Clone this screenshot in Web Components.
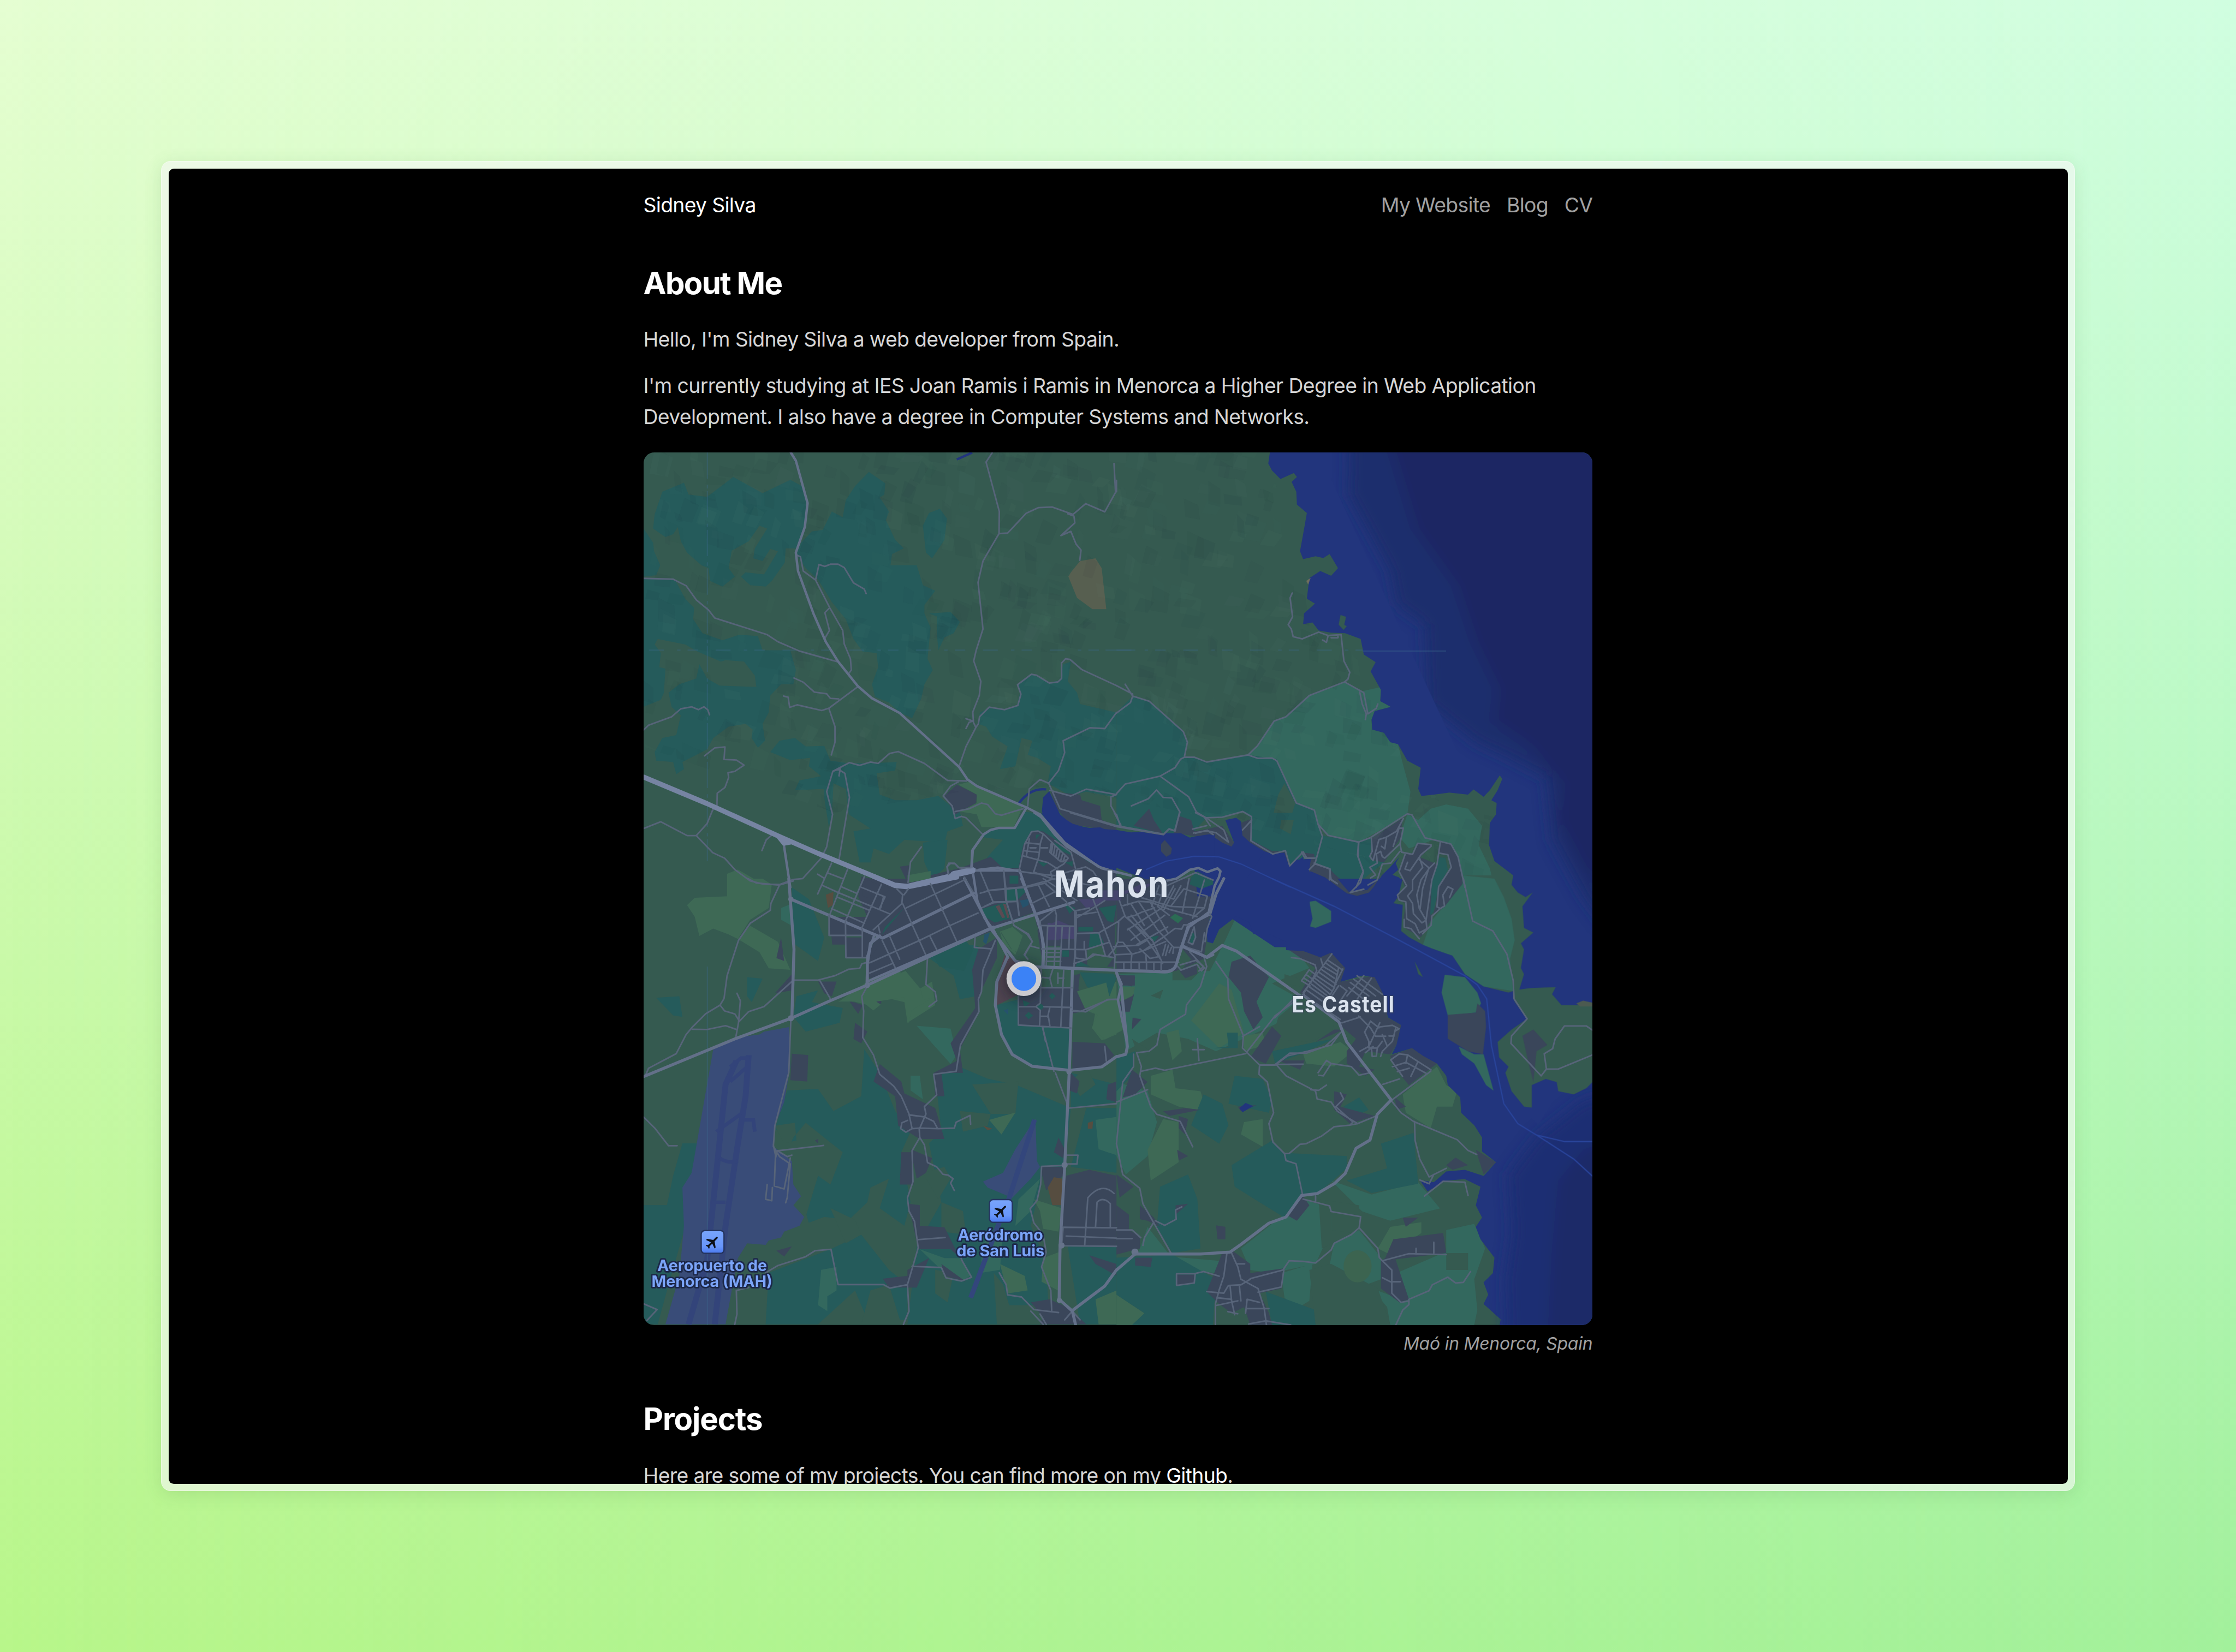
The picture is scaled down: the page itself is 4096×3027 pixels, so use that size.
<!DOCTYPE html>
<html lang="en">
<head>
<meta charset="utf-8">
<title>Sidney Silva</title>
<style>
:root{--r:.80503px}
html,body{margin:0;height:100%;overflow:hidden}
body{font-family:Inter,"Liberation Sans",sans-serif}
</style>
</head>
<body>
<app-backdrop>
  <browser-frame>
    <site-header>
      <span slot="brand">Sidney Silva</span>
      <nav-link>My Website</nav-link>
      <nav-link>Blog</nav-link>
      <nav-link>CV</nav-link>
    </site-header>
    <page-section heading="About Me">
      <text-block style="letter-spacing:-.0185em">Hello, I'm Sidney Silva a web developer from Spain.</text-block>
      <text-block>I'm currently studying at IES Joan Ramis i Ramis in Menorca a Higher Degree in Web Application<br><span style="letter-spacing:-.0178em">Development. I also have a degree in Computer Systems and Networks.</span></text-block>
      <map-figure>Maó in Menorca, Spain</map-figure>
    </page-section>
    <page-section heading="Projects" style="--track:-.0190em">
      <text-block style="letter-spacing:-.0178em">Here are some of my projects. You can find more on my <a>Github</a>.</text-block>
    </page-section>
  </browser-frame>
</app-backdrop>

<template id="map-art">
<svg viewBox="1464 1030 2160 1986" preserveAspectRatio="none" role="img" aria-label="Map of Mahón">
<defs>
<linearGradient id="badge" x1="0" y1="0" x2="0" y2="1"><stop offset="0" stop-color="#79a5fb"/><stop offset=".7" stop-color="#6896fb"/><stop offset="1" stop-color="#4a79ee"/></linearGradient>
<filter id="soft"><feGaussianBlur stdDeviation="16"/></filter>
<filter id="glow" x="-100%" y="-100%" width="300%" height="300%"><feGaussianBlur stdDeviation="14"/></filter>
<path id="plane" d="M21 16v-2l-8-5V3.5c0-.83-.67-1.5-1.5-1.5S10 2.67 10 3.5V9l-8 5v2l8-2.500V19l-2 1.500V22l3.500-1 3.500 1v-1.500L13 19v-5.500l8 2.500z"/>
<clipPath id="hills"><path d="M1464 1030H2880L2960 1290 2980 1430 3090 1490 3140 1650 3280 1830 3400 1860 3420 2000 3460 2300 3300 2150 3100 1950 2900 1900 2700 1850 2400 1790 2200 1800 1900 1850 1464 1700Z"/></clipPath>
<clipPath id="open-sea"><path d="M3000 1030H3624V3016H3300L3380 2450 3500 2560 3600 2400 3440 2100 3380 1850Z"/></clipPath>
</defs>
<rect x="1464" y="1030" width="2160" height="1986" fill="#355a50"/>

<!-- north-west land cover -->
<g transform="translate(1440 1010) scale(.70153 .64413)">
<g class="teal">
<path d="M165 138L180 180 240 188 325 118 370 145 420 175 510 128 548 150 566 210 556 300 528 370 495 370 492 420 450 485 430 505 380 500 350 470 365 455 425 462 470 380 445 372 420 415 390 405 395 370 435 300 410 290 375 345 320 378 310 440 330 470 290 505 250 485 245 440 222 430 175 385 155 345 145 295 130 320 105 330 65 300 70 250 95 170Z"/>
<path d="M34 300L65 350 68 380 88 430 75 465 34 470Z"/>
<path d="M34 476L135 480 170 550 198 580 195 620 225 670 290 695 345 675 405 680 420 730 510 730 528 800 520 850 480 850 445 890 440 950 420 990 428 1050 405 1075 385 1040 388 1010 365 990 310 1000 260 1040 240 1080 205 1100 160 1125 165 1150 140 1168 130 1125 75 1120 70 1090 95 1040 140 1030 155 960 125 930 115 880 150 850 205 830 215 780 240 830 280 855 400 860 395 820 360 770 300 765 285 770 210 735 170 710 80 690 70 710 90 740 85 790 105 795 100 880 90 905 34 930Z"/>
<path d="M765 100L818 140 815 180 800 190 830 240 820 270 850 340 878 370 840 390 835 430 920 430 940 500 980 520 945 570 945 600 965 650 955 760 972 800 945 850 935 900 905 970 865 950 830 915 785 895 775 850 795 790 790 740 745 735 715 690 690 620 645 560 600 480 560 440 530 390 545 350 580 310 615 305 645 240 680 260 690 200 720 150Z"/>
<path d="M995 230L1018 265 1010 340 970 405 950 385 940 290 960 245Z"/>
<path d="M960 600L1030 595 1060 630 1040 670 1010 685 990 730 985 660 985 610Z"/>
<path d="M1420 770L1410 840 1440 880 1450 920 1568 950 1568 1250 1470 1230 1420 1245 1345 1200 1355 1140 1310 1110 1280 1100 1295 1050 1260 1040 1240 1140 1190 1150 1215 1070 1165 1035 1145 1000 1120 990 1125 950 1155 935 1200 940 1245 925 1255 880 1248 850 1295 815 1350 845 1385 835 1395 780Z"/>
<path d="M475 1050L525 1040 560 1070 620 1068 640 1120 700 1130 800 1128 855 1125 850 1155 790 1165 800 1240 850 1260 920 1260 990 1245 1030 1280 1060 1300 1070 1350 1020 1370 1010 1410 880 1400 830 1450 780 1430 770 1480 735 1480 715 1370 770 1360 700 1310 690 1220 650 1200 645 1310 635 1355 620 1250 620 1220 525 1225 540 1190 610 1175 570 1140 575 1110 510 1118 445 1090Z"/>
<path d="M940 1410L1020 1400 1010 1500 970 1540 945 1480Z M1270 1300L1330 1310 1400 1420 1568 1520V1568H1100L1150 1460 1200 1400 1130 1390 1160 1360 1240 1360Z"/>
</g>
<g class="urban"><path d="M1050 1205L1115 1240 1112 1270 1045 1310 1010 1245Z M1355 1230L1450 1240 1455 1260 1515 1280 1520 1330 1568 1350V1375L1480 1355 1415 1345 1375 1290Z M1290 1370L1330 1370 1480 1480 1568 1520V1568H1150L1190 1500 1250 1500 1265 1420Z M865 1495L895 1490 890 1550Z M740 1530L850 1555 1060 1500 1160 1460 1200 1500V1568H740Z"/></g>
<g class="lime"><path d="M1055 1205L1090 1195 1265 1280 1235 1355 1130 1355 1115 1310 1060 1300 1115 1270 1115 1240Z M890 1525L965 1510 965 1540 890 1560Z M305 1520L340 1505 440 1568H305Z"/></g>
<path d="M1420 455L1450 415 1500 405 1520 440 1535 585 1490 585 1440 545 1412 470Z" fill="#575f50"/>
</g>

<!-- north-east land cover -->
<g transform="translate(2540 1010) scale(.70791 .64413)">
<g class="teal">
<path d="M0 950L50 895 105 910 215 1020 228 1055 220 1108 250 1108 290 1125 425 1100 515 1115 580 1270 635 1295 660 1385 780 1408 820 1390 815 1470 860 1480 760 1568 690 1550 620 1480 560 1490 430 1400 430 1320 405 1300 340 1320 290 1320 250 1370 150 1380 0 1350Z"/>
</g>
<g class="sage">
<path d="M730 842L790 875 850 860 848 910 882 930 830 945 820 975 822 1010 860 1022 905 1062 920 1130 945 1230 935 1310 780 1408 680 1385 650 1345 635 1295 580 1270 515 1115 425 1100 455 1070 505 980 545 965 620 890Z"/>
<path d="M1060 1275L1130 1290 1175 1350 1165 1420 1200 1500 1215 1568H1120L1080 1420 1020 1400 940 1430 910 1390 935 1310 970 1330 1010 1290Z"/>
</g>
<path class="land" d="M540 1200L575 1270 565 1305 505 1305 520 1240Z M530 1330L570 1330 560 1380 525 1360Z"/>
<g class="urban"><path d="M55 1350L105 1290 120 1330 150 1380Z M185 1375L200 1315 240 1330 250 1370 300 1360 340 1350 378 1410 370 1425 300 1395 240 1385Z M400 1340L435 1325 432 1400 500 1440 545 1440 560 1495 545 1470 490 1450 430 1410 400 1385Z M600 1445L635 1450 640 1490 690 1510 750 1568H690L620 1515Z M820 1395L918 1325 915 1390 860 1480 820 1470Z"/></g>
</g>

<!-- south-west land cover -->
<g transform="translate(1440 2000) scale(.70153 .66964)">
<g class="teal">
<path d="M75 405L150 400 160 470 130 465Z M515 30L570 70 620 200 600 280 520 220Z M370 335L420 340 385 420 370 400Z M530 400L600 380 580 420 680 440 670 490 560 520 520 470Z"/>
<path d="M750 580L800 660 850 790 900 860 870 930 900 1100 880 1180 800 1120 830 1020 770 1050 760 1100 700 1160 620 1150 570 1170 540 1060 510 1010 520 900 460 850 500 720 600 715 650 790 740 740Z"/>
<path d="M34 1110L110 1110 130 1010 160 900 210 900 170 1180 110 1400 80 1515H34Z"/>
<path d="M440 1340L640 1260 740 1210 830 1330 890 1380 890 1500 760 1500 720 1400 600 1515H430Z"/>
<path d="M980 670L1060 640 1150 680 1240 700 1420 780 1400 980 1330 1000 1290 1180 1340 1300 1350 1515H890L920 1250 1000 1100 960 900 1000 860Z"/>
<path d="M1180 430L1250 410 1250 500 1415 505 1415 650 1300 640 1230 600 1195 530Z M1120 60L1250 20 1290 100 1240 160 1150 130Z M960 270L1060 220 1120 230 1110 400 1060 410 1040 330Z M1420 780L1568 760V700L1420 660Z M1410 1250L1568 1240V1515H1450Z M1470 780L1568 780 1568 1000 1420 980Z"/>
</g>
<g class="land"><path d="M450 1050L560 1150 600 1010 640 1040 680 930 560 830 520 880Z M640 1120L690 1240 740 1210 720 1160Z M1000 1100L1070 1130 1080 1210 1000 1200Z M770 1400L830 1380 870 1515H740Z M1100 700L1250 690 1240 800 1160 800Z M940 1000L1010 980 1030 1020 990 1090Z M980 1330L1040 1340 1020 1440 980 1410Z M460 840L525 830 530 890 490 900Z M1420 690L1470 640 1500 700 1450 740Z M1060 790L1160 800 1150 840 1070 860Z M1170 1340L1200 1380 1220 1450 1330 1450 1350 1515H1180Z"/></g>
<g class="lime"><path d="M305 0H420L450 20 440 100 380 140 340 205 310 190 260 170 215 195 200 130 175 90 200 65 305 60Z M340 205L380 160 470 215 510 310 440 305 410 250Z M665 420L760 350 860 310 920 380 970 350 980 430 890 490 880 420 800 400 740 400Z M1190 180L1230 165 1265 185 1240 260 1200 220Z M1450 380L1568 350V530L1520 550 1490 510 1500 450 1450 430Z M1155 820L1240 795 1195 870Z M1300 1090L1390 1120 1380 1200 1330 1190 1320 1130Z M1190 1310L1270 1350 1280 1400 1215 1410Z M1330 1290L1380 1270 1378 1400 1325 1370Z M1500 1430L1568 1400V1515H1510Z"/></g>
<g class="sage"><path d="M920 500L1030 510 1050 600 1030 630 970 560Z M900 670L930 670 940 750 900 720Z M480 100L515 85 515 160 480 140Z M610 1330L660 1320 660 1400 630 1420 630 1470 600 1450Z M930 1260L1010 1290 1060 1290 1095 1350 1060 1370 990 1320Z M1250 1090L1320 1020 1290 1130 1240 1180Z M1130 1240L1200 1200 1190 1330 1130 1340Z M1500 820L1568 810V940L1510 920Z"/></g>
<g class="urban">
<path d="M740 0H1568V50L1560 300H1330L1300 100 1210 110 1160 180 770 340 760 270 790 190 640 195 635 130 760 130 730 60Z M690 200H770L755 270 690 270Z"/>
<path d="M1120 240L1180 200 1180 270 1130 380 1115 470 1060 580 1070 660 1000 660 1010 740 980 740 975 660 1050 620 1030 560 1110 440 1100 310Z M1250 370L1420 370 1450 400 1470 450 1420 460 1415 505 1250 500Z M1425 555L1530 560 1560 600 1530 640 1425 650Z M800 630L870 690 880 730 980 780 1010 885 930 885 860 840 850 740 780 690Z M870 930L905 930 910 1040 865 1040Z M900 920L970 950 950 1000 920 1020Z M720 490L760 520 740 560 715 545Z M700 415L745 430 730 460Z M745 420L805 400 805 425Z M480 200L490 280 465 270Z M460 390L515 325 515 380Z M600 350L660 350 645 400 620 390Z M515 595L568 600 565 690 510 685Z M890 1105L930 1110 930 1180 1010 1185 1060 1290 1030 1260 925 1260 905 1160Z M810 1360L890 1350 890 1330 960 1290 920 1390 830 1390Z M465 1265L515 1250 490 1285Z M1320 980L1400 980 1395 1010 1340 1060Z M1405 1010L1480 990 1568 1010V1250L1390 1250 1395 1050Z M1380 880L1400 920 1395 950 1365 930Z M1290 1440L1350 1430 1415 1460 1470 1515H1320L1330 1490Z M1480 1280L1568 1310V1350L1500 1310Z M1420 660L1448 690 1440 730 1415 720Z M1540 700L1568 690V760L1535 750Z M1000 1310L1040 1340 1080 1370 1010 1350Z M590 890L600 885 600 900Z"/></g>
<path d="M260 580L335 540 410 530 425 520 505 505 510 640 490 760 460 840 455 910 515 960 520 1040 545 1080 520 1110 555 1150 540 1180 490 1200 480 1220 440 1230 430 1245 370 1240 340 1290 320 1400 300 1515H105L150 1350 165 1180 160 1050 190 1000 215 850Z" fill="#394c78"/>
<g fill="none" stroke="#33447a"><path stroke-width="19" d="M335 620L300 700 265 1050 240 1300 180 1515"/><path stroke-width="19" d="M375 600L365 740 340 900 300 1180 265 1515"/><path stroke-width="12" d="M315 640L350 610 378 610 M315 690L370 640 M270 860L350 800 M345 820L390 820 395 860 M280 950Q310 970 340 960 M255 1100H300"/></g>
<path d="M1305 815L1310 960 1320 980 1290 1020 1230 1085 1150 1050 1135 1030 1200 1000 1240 920Z" fill="#394c78"/>
<path d="M1302 820L1220 1085 1180 1190 1095 1425" fill="none" stroke="#33467c" stroke-width="16"/>
<path d="M625 55L650 45 648 90 632 100Z M1345 1050L1365 1015 1392 1020 1390 1110 1360 1110Z M1475 830L1492 825 1490 850 1475 850Z M1135 840L1165 850 1150 856Z" fill="#564d40"/>
<path d="M1205 260L1290 300 1260 390 1180 430 1180 350Z" fill="#4f4450"/>
<path d="M1345 150L1430 165 1430 205 1345 205Z" fill="#46456f"/>
</g>

<!-- south-east land cover -->
<g transform="translate(2540 2000) scale(.70791 .70153)">
<g class="sage"><path d="M0 310L300 300 350 200 385 123 430 150 545 190 620 290 500 340 590 390 560 450 450 500 320 560 230 520 130 500 30 560Z M0 660L100 690 130 790 100 900 30 960 0 900Z M400 1200L600 1040 690 1070 690 1140 640 1250 500 1280 430 1270Z M690 980L820 1025 970 985 1040 1070 880 1110 790 1080Z M530 1280L630 1250 620 1370 580 1395 540 1360Z M700 1180L780 1140 850 1230 850 1300 770 1330 680 1280Z M900 1280L1060 1210 1060 1140 1150 1120 1185 1200 1150 1300 1160 1400 1150 1448H880L870 1390 820 1330 930 1370Z M160 1225L330 1240 330 1280 190 1270Z M100 1130L170 1220 70 1215Z"/></g>
<g class="land"><path d="M180 260L260 230 290 280 240 330 180 330Z M110 380L150 360 140 390Z M520 450L590 390 700 470 690 500 620 530 500 520Z"/></g>
<g class="lime"><path d="M110 640L180 620 190 680 270 690 290 755 200 740 110 700Z M150 780L200 790 200 920 110 980 100 880Z M410 790L470 780 470 870 400 830Z M600 570L720 530 760 560 700 610 610 600Z M920 700L1030 610 1060 670 1095 690 1080 740 1030 740 1010 810 930 760Z M0 400L60 350 50 400Z M160 500L200 490 210 560 180 590Z M240 460L330 340 370 360 410 500 330 550Z M840 1200L880 1130 980 1115 980 1150 880 1220Z M0 1350L90 1410 70 1448H0Z M470 500L480 540 410 560 410 510Z"/></g>
<g class="teal"><path d="M380 640L470 650 500 720 490 760 360 730Z M280 700L340 730 360 800 330 860 240 800Z M370 930L500 850 540 890 740 900 740 940 650 1020 600 1025 540 1100 380 1000Z M850 860L955 825 970 990 820 1020 740 980 870 940Z M0 1230L180 1220 320 1300 310 1448H50L90 1410 0 1350Z M140 1000L230 960 260 1040 270 1200 180 1215 130 1130Z M500 560L640 530 700 520 590 570 510 600Z M730 740L780 710 810 750 770 770Z M480 1340L640 1400 640 1448H500Z M310 550L360 545 355 500H390V550Z M0 580L60 560 50 640 0 690Z"/></g>
<g class="land"><path d="M620 1270L690 1250 840 1330 880 1448H640Z M650 1040L780 1060 780 1090 690 1090 690 1140 760 1150 660 1200Z M1060 1215L1130 1215 1130 1270 1060 1270Z M50 520L110 560 80 600Z M730 480L770 450 795 490 760 520Z M450 1290L500 1280 500 1330 450 1340Z M540 310L600 330 590 350 540 340Z"/></g>
<ellipse cx="775" cy="1258" rx="45" ry="52" fill="#3c6450"/>
<g class="urban">
<path d="M0 0H345L300 120 290 200 280 260 240 280 190 300 0 305Z"/>
<path d="M545 225L700 240 735 290 720 335 830 315 870 400 870 450 915 475 900 540 880 570 800 560 780 610 830 620 800 640 740 600 740 560 770 520 700 460 590 370 640 290Z M880 575L950 550 1030 600 940 670 890 610Z M370 270L430 250 490 320 450 400 470 450 440 490 410 430 400 370 360 320Z M500 480L530 510 480 600 430 580Z M0 310L60 320 50 350 10 340Z M20 370L45 380 40 430 15 430Z M50 620L100 660 60 700 20 710Z M200 770L230 780 220 830 200 810Z M0 960L55 1000 10 1035Z M0 1060L40 1090 40 1140 75 1160 75 1200 0 1220Z M75 1060L120 1100 140 1130 100 1110 75 1105Z M545 1090L600 1030 620 1060 580 1110Z M340 1215L370 1205 430 1250 430 1280 535 1265 530 1330 460 1345 490 1410 500 1448H430L410 1390 370 1410 330 1380 290 1340Z M190 1285L250 1285 250 1315 195 1320Z M850 1240L890 1215 940 1365 910 1375 850 1330Z M890 1170L1050 1150 1060 1215 860 1240Z M920 1100L970 1100 930 1130Z M320 1125L350 1130 350 1170 325 1170Z M700 690L740 700 720 740 830 770 750 795 700 750Z M895 710L930 740 900 750Z M1155 880L1220 920 1180 960Z M1060 930L1090 905 1130 930 1080 945Z M520 590L605 590 590 620Z M640 530L700 490 730 490Z M390 740L450 735 400 755Z M150 755L220 745 270 750 170 770Z M195 880L230 900 200 915Z M60 1230L115 1230 110 1260 60 1255Z M190 1060L230 1055 190 1090Z"/></g>
</g>

<!-- relief facets -->
<g id="relief" clip-path="url(#hills)"></g>

<!-- sea -->
<g class="sea">
<g transform="translate(2540 1010) scale(.70791 .64413)">
<path d="M497 0L488 70 500 95 527 125 570 104 580 118 563 135 578 170 580 215 612 245 600 320 590 380 600 408 640 398 665 404 685 390 712 440 690 467 655 450 620 475 612 548 638 565 603 600 600 638 630 632 650 660 690 668 735 670 785 690 795 745 833 772 817 805 850 870 848 910 882 930 830 945 820 975 822 1010 860 1022 880 1055 905 1062 935 1120 978 1145 970 1220 980 1245 1020 1240 1070 1233 1130 1240 1148 1222 1180 1248 1200 1225 1232 1172 1240 1185 1225 1225 1205 1260 1222 1270 1220 1310 1200 1340 1198 1420 1215 1475 1275 1525 1272 1545H1600V0Z"/>
<path d="M240 1390L300 1380 340 1410 370 1424 378 1410 350 1330 385 1322 400 1335 405 1385 430 1410 490 1450 540 1445 555 1495 600 1460V1600H260Z"/>
</g>
<path transform="translate(1440 1010) scale(.70153 .64413)" d="M1350 1228L1330 1250 1326 1300 1355 1350 1400 1405 1500 1490 1568 1510V1365L1480 1358 1415 1345 1385 1310Z"/>
<path transform="translate(2240 1850) scale(.33333)" d="M385 0H500L560 50 600 75 700 105 790 100 860 130 900 118 1000 135 1060 130 1200 150 1240 140 1340 140 1400 170 1570 150V395L1520 405 1460 378 1380 400 1300 445 1240 455 1100 455 960 400 860 360 800 350 700 290 600 230 480 130Z"/>
<path transform="translate(2900 1850) scale(.38265)" d="M-60 230L0 250 60 265 85 315 130 280 215 275 205 350 270 340 320 390 380 430 440 480 500 495 570 470 600 430 640 370 690 320 740 265 720 300 735 340 700 370 740 385 775 440 725 500 695 545 760 545 770 600 765 700 870 785 900 800 0 800-300 600Z"/>
<path transform="translate(2540 2000) scale(.70791 .70153)" d="M350 0L320 60 305 115 290 160 292 205 310 210 330 165 385 123 425 140 440 180 490 180 545 205 545 232 600 235 655 255 690 240 735 290 720 335 790 315 830 320 860 380 872 450 915 475 900 540 885 570 950 550 985 575 1030 600 1060 640 1065 670 1105 710 1108 760 1150 800 1175 840 1175 885 1220 920 1180 965 1120 945 1060 950 1020 985 975 978 1000 1015 1060 980 1120 975 1170 1000 1155 1060 1175 1100 1155 1130 1170 1170 1215 1230 1210 1280 1180 1310 1195 1350 1180 1380 1235 1430 1230 1460H1600V0Z"/>
<path transform="translate(2540 2000) scale(.70791 .70153)" d="M395 745L415 728 440 738 405 758Z"/>
</g>
<g clip-path="url(#open-sea)">
<g filter="url(#soft)">
<g transform="translate(2540 1010) scale(.70791 .64413)">
<path fill="#1e2d6d" d="M750 -80L745 180 880 450 900 570 990 640 1000 920 1160 1060 1240 1100 1380 1180 1400 1400 1500 1600 1568 1700H1700V-80Z"/>
<path fill="#1b2864" d="M855 -80L960 300 1090 500 1150 700 1225 870 1210 980 1330 1070 1430 1200 1420 1330 1500 1500 1568 1568H1700V-80Z"/>
</g>
<g transform="translate(2540 2000) scale(.70791 .70153)">
<path fill="#1f2f73" d="M1640 690L1500 720 1350 840 1260 960 1270 1150 1250 1300 1260 1600H1640Z"/>
<path fill="#1c2a68" d="M1640 830L1500 880 1420 980 1400 1200 1380 1600H1640Z"/>
</g>
</g>
</g>

<!-- La Mola and the islands -->
<g transform="translate(2540 2000) scale(.70791 .70153)">
<path class="land" d="M1110-10L920 0 905 60 890 80 920 85 915 170 940 190 985 215 1018 183 1025 205 1010 225 1080 250 1120 310 1180 350 1260 370 1275 365 1280 400 1320 455 1270 490 1225 530 1230 580 1260 610 1250 630 1270 690 1310 740 1335 743 1335 670 1380 650 1415 660 1420 690 1470 700 1510 680 1540 650V405L1480 410 1430 410 1400 375 1412 352 1330 355 1295 360 1310 310 1300 290 1310 230 1300 210 1340 175 1310 160 1305 90 1338 45 1315 60 1290 45 1270 20 1275-10Z"/>
<path class="sage" d="M1115-10L1215 0 1245 60 1270 130 1280 200 1265 260 1275 365 1180 350 1120 310 1080 250 1010 225 985 215 1010 140 1110 20Z"/>
<path class="sage" d="M620 75L640 72 690 105 690 140 640 160 622 155 630 130Z M1055 312L1120 320 1160 370 1172 405 1155 435 1065 445 1045 370Z M1100 545L1150 570 1180 570 1212 688 1188 670 1150 600 1110 570Z"/>
<path class="land" d="M958 268L985 320 970 310Z"/>
<path class="urban" d="M1065 442L1155 435 1160 405 1185 430 1188 480 1178 570 1130 560 1065 520Z M1305 510L1340 490 1385 540 1350 560 1340 660 1325 600Z"/>
<path d="M1478 405L1500 396 1540 405V415H1490Z" fill="#4c5a50"/>
</g>
<g transform="translate(2540 1010) scale(.70791 .64413)"><path class="land" d="M720 605L738 612 732 640 740 645 730 658 714 640Z"/><path class="urban" d="M143 1415L155 1400 178 1430 175 1450 160 1460 143 1440Z"/><path d="M610 485L624 474 616 498Z" fill="#71705f"/></g>
<g transform="translate(2900 1850) scale(.38265)">
<path class="urban" d="M770 250L830 240 850 185 935 195 865 265 950 300 970 310 940 560 930 640 870 740 780 690 765 640 780 540 725 510 775 440 740 350Z M985 175L1045 190 1095 280 1118 420 1010 560 940 610 960 540 970 440 1045 330 1030 250 975 240Z"/>
<path class="urban" d="M205 345L235 300 330 335 380 400 440 470 550 460 610 400 640 360 590 440 560 475 490 495 430 480 300 385Z"/>
<path class="teal" d="M980 265L1015 268 1030 340 975 440 945 590 925 610 935 400Z"/>
</g>

<!-- town parks and squares -->
<g transform="translate(1860 1850) scale(.33333)">
<path class="urban" d="M600 520L1000 425 1100 340 1270 380 1560 400V620L1480 680 1200 780 345 1130 350 1020 440 860 580 640Z M80 700L380 830 330 990H310V830L190 835 190 900H100Z M310 450L500 520 400 600 310 570Z"/>
<path class="square" d="M1280 520L1400 510 1420 540 1350 610 1290 610Z M1110 660L1290 610 1320 720 1210 750 1140 710Z M1310 430H1370V485H1310Z M1490 150H1520L1490 180Z M440 830L590 650 460 780Z M1400 1280L1450 1300 1410 1330Z M1440 1360L1470 1385 1440 1410 1415 1385Z M790 980L1010 870 1060 940 1000 1080 830 1050Z"/>
<path d="M1215 640L1240 630 1280 715 1260 720Z M1265 620L1285 625 1310 715 1295 720Z" fill="#5b4a52"/>
<path d="M1380 600L1440 590 1440 630 1400 650Z M1140 830L1175 820 1150 900 1130 880Z M1270 1350L1300 1340 1300 1380Z" fill="#26526c"/>
<path class="land" d="M1340 740L1440 700 1510 790 1430 900 1440 1000 1320 930 1250 820Z"/>
<path class="lime" d="M1250 810L1330 780 1400 840 1360 950 1330 940Z M630 430L770 400V450L610 480Z M150 1290L340 1190 600 1080 700 1200 720 1280 790 1260 640 1350 620 1440 590 1260 400 1290 430 1310 380 1350 330 1310 250 1290Z"/>
</g>
<g transform="translate(2240 1850) scale(.33333)">
<path class="land" d="M410 910H520V1050H400Z M390 1070H550V1190H390Z M700 930L800 900 830 980 880 990 830 1060 700 1050Z M1350 930L1410 1000 1340 1075 1310 1040Z"/>
<path class="square" d="M780 650L900 630 880 750 840 740Z M640 780H740V810H640Z M720 820H780L820 900 710 920Z M1120 850L1190 840 1160 880Z M1410 440L1450 400 1560 460V490L1480 520 1400 490Z M470 200L580 260 590 290 500 250Z M550 340L600 330 600 370Z M360 330L430 345 400 370Z M1420 810L1440 850 1420 900 1400 880Z M530 940H575V985H530Z M460 1230L485 1252 460 1275 440 1252Z M380 1300L410 1325 380 1350 355 1325Z M540 620L620 650 580 690Z M640 1010L720 1050H620Z"/>
<path d="M1265 715L1300 690 1355 720 1320 755Z" fill="#2c6b54"/>
<path d="M640 590L760 590 1130 480 1130 500 820 600 700 660Z M430 770L500 735 560 760 620 790 620 830 510 830 510 870H430Z M1000 520L1060 490 1110 510 1050 550Z M800 530H930V600H800Z" fill="#45456d"/>
<path class="teal" d="M650 1090L880 1100 900 1130 850 1260 700 1190Z"/>
<path class="urban" d="M900 1110H1025V1180H930Z M610 1110L650 1100 640 1200 690 1340H600Z M920 1290L1020 1240 990 1360H940Z M1330 1080L1450 1040 1450 1100 1370 1130Z M1010 1400L1070 1410 1005 1480Z"/>
<path class="lime" d="M630 1220L830 1160 850 1250 920 1280 950 1480 820 1550 730 1470 770 1380 690 1350Z M940 1190L1020 1190 1010 1250 930 1290Z"/>
</g>

<!-- ferry routes -->
<g class="ferry"><path transform="translate(2540 1010) scale(.70791 .64413)" d="M95 1505L160 1475 250 1458 330 1460 400 1485 560 1568"/>
<path transform="translate(2540 2000) scale(.70791 .70153)" d="M500 0L700 90 900 195 1120 315 1160 345 1190 390 1205 540 1245 730 1290 795 1350 832 1440 853H1540 M1350 832L1470 910 1535 970"/></g>
<path d="M1609 1030V1960" class="grid" stroke-dasharray="60 14 8 6"/><path d="M1609 2200V3016" class="grid"/>
<path d="M1476 1480H3100" class="grid" stroke-dasharray="34 30 8 16 24 40"/><path d="M3100 1482H3290 M2515 1480H2583" class="grid"/>
<path transform="translate(1440 1010) scale(.70153 .64413)" d="M1050 56L1100 32 M1252 1270Q1290 1215 1340 1222" fill="none" stroke="#22357f" stroke-width="8"/>

<!-- roads, north-west -->
<g class="minor" transform="translate(1440 1010) scale(.70153 .64413)"><path d="M34 476L130 479 172 502 205 552 245 588 265 616 435 675 470 700 540 733 660 770
M34 1012L50 995 125 965 155 937 190 930 212 940 230 930 242 940 248 958
M232 1103L265 1075 298 1072 295 1116 335 1118 360 1136 330 1158 308 1163 310 1180 298 1215 273 1235 272 1280 258 1295 240 1343 205 1385
M34 1360L90 1336 175 1385 205 1385 258 1445 297 1465 330 1505 380 1545 425 1557 475 1558 520 1540 550 1537 610 1465 628 1425 647 1310 628 1230 648 1158 702 1127 735 1137 770 1125 795 1130 832 1095 860 1088 945 1130 1020 1190 1082 1192
M448 1385L432 1400 418 1438 M528 392L543 400 552 450 592 482 638 580 680 660 685 708 705 760 708 800 700 812 M592 482L603 427 622 434 640 426 665 426 685 438 715 492 750 514 756 530 M638 580L622 597 637 660 622 688
M522 828L552 843 588 878 628 884 640 900 667 902 M488 892L503 896 508 932 532 923 612 943 635 935 730 858 M635 935L655 1000 655 1055 643 1100 M648 1158L672 1148 668 1174 M665 1150L687 1165 702 1250 668 1470
M1165 32L1145 65 1188 240 1187 318 1215 316 1275 246 1315 226 1360 224 1427 250 1468 212 1530 241 1565 172 1560 70 M1410 248L1430 256 1433 280 1388 325 1420 310 1437 355 1453 376 1449 412 M1187 318L1135 415 1119 490 1135 655 1113 730 1105 768 1128 840 1123 890 1102 948 1104 985 1112 1003 1080 1070 1057 1142 M1080 972L1102 980 1090 985 1080 1006
M1112 1003L1120 990 1124 965 1155 931 1205 940 1248 925 1258 885 1247 852 1292 815 1308 818 1350 846 1378 842 1390 830 1390 775 1403 760 1418 763 1455 798 1568 855 M1568 950L1530 1007 1482 1004 1395 1050 1400 1092 1380 1155 1348 1200 1385 1290 1568 1350 M1348 1200L1320 1187 1285 1220 1280 1280 M1352 1225L1420 1245 1470 1221 1568 1240 M1568 1240L1550 1248V1280L1568 1315
M1055 1195L1030 1210 1006 1245 1035 1280 1045 1325 1065 1317 1080 1322 1135 1382 M1045 1300L1090 1290 1130 1270 1150 1275 1175 1308 1195 1313 1265 1290 M935 1425L900 1478 892 1550 M1022 1520L1018 1495 1030 1483 1045 1485 1055 1498 1080 1502"/></g>
<g class="mid" transform="translate(1440 1010) scale(.70153 .64413)"><path style="stroke-width:4.500px" d="M512 32L528 60 566 210 557 295 528 385 535 450 585 600 625 700 665 770 730 858 775 900 865 952 1057 1142 1085 1187 1115 1210 1275 1285 1320 1310 1400 1410 1510 1495 1568 1515 M1275 1288L1238 1358 1185 1358 1160 1365 1138 1380 1102 1435 1098 1500 M488 1410L510 1568"/></g>
<g class="major" transform="translate(1440 1010) scale(.70153 .64413)"><path d="M34 1178L240 1272 470 1386 600 1448 850 1560 890 1564 1040 1525 1105 1507"/><path d="M1040 1522L1100 1508" style="stroke-width:12"/><path d="M472 1388L510 1408 490 1412Z"/></g>

<!-- roads, north-east -->
<g class="minor" transform="translate(2540 1010) scale(.70791 .64413)"><path d="M0 130V170 M565 528L558 545 566 612 552 640 562 655 568 682 597 690 650 666 680 678 722 675 731 768 750 808 744 832 733 842 795 880 808 955 835 935 840 920 M782 878L790 920 803 955 800 975 M680 680L675 702 663 694 M690 686H712V678 M733 842L620 890 545 965 507 980 453 1068 423 1100 455 1112 500 1111 515 1120 578 1270 636 1295 648 1345 680 1384 778 1408 815 1393 935 1308 950 1312 992 1393 1035 1404 1075 1415 1098 1460 1120 1568
M423 1100L290 1125 250 1108 218 1108 206 1115 188 1145 140 1175 28 1203 0 1237 M218 1108L228 1055 215 1018 105 910 52 892 28 850 M52 892L45 915 0 952 M0 855L52 885 M140 1175L232 1248 257 1302 288 1322 340 1320 406 1300 434 1318 432 1403 502 1450 543 1438 557 1492 600 1442 612 1465 635 1465 M48 1280L102 1255 129 1224 150 1250 178 1252 204 1302 187 1368 168 1362 152 1380 0 1350 M0 1310L12 1350 M248 1376L290 1368 320 1375 360 1408 345 1365 288 1322 M245 1362L290 1350 M648 1345L662 1388 638 1485 684 1502 690 1540 710 1555 M638 1485L620 1505 M778 1408L775 1455 793 1512 770 1568 M405 1365L435 1330"/></g>

<!-- roads, south-west -->
<g class="minor" transform="translate(1440 2000) scale(.70153 .66964)"><path d="M372 0L400 15 475 22 520 8 M475 22L447 85 445 108 380 152 342 210 305 330 295 408 282 430 235 460 192 505 172 530 140 595 50 645 42 665 M282 430L297 450 330 460 345 485 375 452 425 435 520 345 600 345 655 330 700 308 735 305 742 290 758 285 M192 512L240 513 300 500 333 512 M337 390L348 415 342 490 333 540 M605 345L642 412
M34 810L72 850 115 908H143 M512 475L505 660 460 840 455 910 475 945 510 970 500 1085 495 1102 M455 905L462 940 458 1045 490 1055 510 950 M470 925L618 907 M435 1040L430 1090 450 1095 452 1050 M462 950L468 925 500 945 515 940
M760 365L742 400 748 450 745 540 780 600 800 665 845 705 870 740 895 800 905 850 930 848 990 850 1042 848 1048 828 1093 805 1095 835 M895 803L945 810 975 825 988 850 M905 850L885 862 868 850 872 830 890 822 M930 880L905 925 908 1030 890 1085 895 1130 913 1165 925 1255 890 1380 895 1470 877 1515 M930 880L945 905 955 965 985 980 1005 1005 1022 1008 1038 1020 1030 1035 1042 1060 M928 848L930 880 M930 848L950 800 945 775 985 735 975 665 1048 655 1062 565 1122 452 1120 410 1130 385 1135 310 1175 210 M925 1227L1012 1220 M905 1318L1000 1322 1015 1357 1065 1368 1098 1355 1068 1300 1060 1280 M890 1380L833 1392 812 1380H665L642 1260 590 1265 560 1285 470 1315 430 1340 M330 1515L337 1480 335 1400 375 1390 M34 1445L78 1465 45 1502
M955 270L950 360 980 385 985 415 960 435 M1188 1340L1210 1380 1215 1415 1260 1422 1300 1465 1380 1475 M1370 660L1408 765 M1328 505L1365 655 M1415 780L1568 765 M1400 975L1325 978 1322 1040 1310 1095 1288 1122 1300 1170 1330 1210 1340 1270 1325 1320 1355 1400 1358 1470 M1408 940H1443L1440 970H1400 M1568 1250L1390 1248 1395 1185 1568 1187 M1405 1215L1568 1222 M1465 1245L1475 1085Q1520 1030 1560 1070 M1500 1185L1505 1100Q1525 1080 1548 1105V1187 M1425 450L1450 452 1540 412 1568 410 M1320 1480L1340 1515 M1290 1470L1330 1515 M1400 1500L1425 1470 1450 1500 M1568 230L1540 265 1500 258 1470 275 1435 270 1432 110 1480 100 M1530 570L1535 620"/></g>
<g class="mid" transform="translate(1440 2000) scale(.70153 .66964)"><path d="M505 0L522 240 515 475 M512 70L810 202 1105 50 M34 673L330 545 512 475 640 415 760 362 M760 362V290L770 220 800 195 M760 362L950 270 1160 170 1430 80 M1160 170L1240 280 1300 300 1568 312 M1075 0L1130 110 1160 170 M1260 0L1320 160 1332 230 1330 300 M1215 265L1180 350 1175 430 1195 530 1230 598 1295 638 1415 652 1520 640 1568 605 M1425 310L1420 500 1415 652 1400 980 1385 1250 1382 1430 1425 1470 1435 1515 M1425 1468L1530 1385 1568 1330"/></g>
<g class="knot"><circle cx="1799" cy="2047" r="6"/><circle cx="1799" cy="2318" r="7"/><circle cx="2432" cy="2440" r="6"/><circle cx="2422" cy="2652" r="7"/><circle cx="2415" cy="2835" r="7"/><circle cx="2410" cy="2960" r="6"/><circle cx="1973" cy="2243" r="6"/><circle cx="2582" cy="2850" r="8"/></g>
<path transform="translate(1440 2000) scale(.70153 .66964)" class="majorline" d="M780 -8L850 24 890 28 1050 -5"/>

<!-- roads, south-east -->
<g class="minor" transform="translate(2540 2000) scale(.70791 .70153)"><path d="M320 270L358 325 360 390 408 510 405 550 460 605 458 635 485 660 505 760 490 795 503 855 540 892 545 915 577 925 598 1025 M280 250L290 285 270 350 225 410 222 440 140 490 130 540 105 560 65 565 80 610 75 640 110 740 130 765 205 788 245 870 M80 625L125 615 155 622 415 568 510 445 570 400 M55 570V610L20 660 0 860 20 960 75 1005 85 1055 175 1215 M0 725L100 685 M120 1115L90 1165 85 1190 M125 1110L155 1125 192 1105 190 1075 210 1065 M260 520L265 590 M245 555H282 M405 512L460 480
M460 605L510 605 550 575 615 560 690 540 720 500 M515 603L600 602 M515 605L545 640 640 690 645 715 690 725 710 755 775 795 M675 670L650 687 625 685 M720 695L730 715 705 740 760 790 750 800 700 805 660 835 610 860 590 862 555 892 540 892 M750 800L775 795 835 770 M648 630L675 590 690 600 665 640 650 638 M690 600L755 610 780 638 815 630 M855 668L910 650 M800 565L825 545 M883 720L1010 625 M883 720L915 760 955 788 1095 847 1130 882 1158 895 M958 788L960 850 975 910 1005 968 1060 940 M975 978L1005 990 1020 960 M990 1030L1050 982 1120 985 1130 1028
M600 1040L640 1050 685 1062 690 1080 785 1097 780 1133 755 1155 700 1183 690 1205 640 1247 600 1242 555 1240 535 1270 430 1298 M780 1133L840 1200 845 1230 855 1240 885 1270 885 1345 915 1375 940 1370 M855 1240L940 1217 1060 1220 M1020 1180V1215 M963 1200V1220 M855 1295L880 1308H912 M1138 1275L1115 1310 1090 1312 1065 1293 1015 1318 1005 1337 940 1365 940 1382 920 1400 898 1448 M355 1215L345 1290 330 1335 318 1380V1448 M330 1290L280 1275 250 1282H193V1320L250 1312 253 1283 M370 1215L390 1260 400 1300 455 1330 475 1395 482 1448 M290 1340L345 1345 360 1320 400 1318 430 1300 M325 1360L370 1365 M365 1320L370 1370 380 1415 M395 1320L400 1370 M415 1410L420 1365 460 1375 M320 1385L390 1370 M358 1405L390 1412 M418 1395L490 1395 M425 1445L480 1435 560 1448 M455 1342L530 1325 538 1270 M390 1250H412 M0 1140H50L78 1165 M0 1168H50 M640 1030V1050
M1115 0L1145 138 1210 170 1255 245 1275 330 1278 390 1320 455 1270 510 1268 535 1365 640 1382 618 1375 568 1402 552 1410 520 1440 478H1510L1535 495 M1382 618H1420L1535 570
M205 280L255 265 280 285 265 300 M0 272L200 272 M0 295L180 300"/></g>
<g class="mid" transform="translate(2540 2000) scale(.70791 .70153)"><path d="M345 0L320 50 300 115 232 150 190 285Q180 302 150 302L0 298 M215 220L290 255 340 217 385 235 590 380 M600 378L715 465 740 530 883 718 838 765 815 848 770 875 735 957 700 990 645 1022 595 1028 545 1098 490 1118 400 1187 365 1212 270 1218 60 1218 0 1270 M0 305L15 350 35 545 30 570 0 578"/></g>

<!-- Mahón streets, west -->
<g class="minor" transform="translate(1860 1850) scale(.33333)"><path d="M95 345L0 555 M205 385L85 690 M320 435L190 740 M435 490L300 790 M65 410L170 450 M0 420L40 445 M30 495L140 545 490 690 M160 505L265 550 M300 510L460 575 420 660 M130 575L350 665 M95 655L320 755 M78 700V838H305 M190 750L193 990H330 M305 800V985 M450 575L430 650 M415 775L425 820
M580 620L740 975 M770 485L950 880 M1000 460L605 650 M1000 440L1060 540 M440 870L535 1070 M490 840L560 1000 M765 840L815 940 M355 1025L690 875 905 770 1095 685 M355 1095L510 1030 M1110 400L1200 615 M1270 390L1285 600 1340 770 1430 830 1465 880 1410 970 1435 1000 M1110 550L1180 530 1420 510 1560 480 M1120 650L1200 615 1355 605 M1355 515L1375 700 M1075 850L1070 920 1185 930 M895 430L885 370 895 345H935L965 375 1050 375 M540 520L580 560 575 620 380 800 M620 520L590 560 M1455 910L1510 925"/></g>
<g class="mid" transform="translate(1860 1850) scale(.33333)"><path style="stroke-width:4.500px" d="M1050 375L1055 260 1120 165 M1065 395L1380 395 M1100 390L1230 375 1380 400 1480 680 1530 830 1540 940 1535 1050 M1060 410L1090 600 1140 720 1200 800 1300 990 M385 840L340 980 335 1180 M1200 780L345 1150"/></g>
<path class="majorline" transform="translate(1860 1850) scale(.33333)" d="M900 440L960 420 1060 395"/>

<!-- Mahón streets, centre and east -->
<g class="minor" transform="translate(2240 1850) scale(.33333)"><path d="M235 395L275 210 320 130 365 125 400 145 570 310 540 350 450 405 460 440 M400 145L380 210 370 300 335 405 M280 205L375 215 M270 260L365 270 M265 295L430 340 500 385 M305 180L285 295 M310 240H350 M385 240H430 M455 210L445 270 520 335 565 320 M465 215L455 280 M480 230L470 290 M497 245L485 305 M515 262L500 320 M532 280L518 333 M548 298L535 335 M480 190L590 270 620 380
M335 405L470 455 570 455 690 490 800 500 M235 400L340 415 480 430 690 370 740 400 760 430 M130 395L145 520 150 610 200 770 300 830 325 880 275 970 M0 540L30 530 280 505 480 450 M0 640L60 610 220 605 M210 515L235 700 M320 620L560 500 M365 490L440 640 M410 480L560 610 M400 450L630 600 M380 740V770L620 775 M380 740L480 660 490 700 475 1050 M560 620L625 680V820L610 1050 M625 720L760 640 820 600 M630 700L760 680 M430 775L420 1050 M530 775L515 1050 M580 780L575 925 M420 925H520 M420 955H520 M420 985H520 M420 1015H520 M390 930L690 935 695 1000 M680 880V930 M630 825L780 820 915 740 955 705 M780 820L825 980 M690 935L850 885 M610 1030L700 1000 740 965 885 990
M740 590L890 980 885 1070 M920 600L960 710 1145 870 1215 1030 M915 740L910 880 880 940 M910 885H945L1005 965 1000 1020 M890 970L1010 965 1080 945 1235 880 M945 635L1050 605 1130 610 1260 660 1450 710 M1000 625L1090 770 M1050 605L1180 800 1290 920 1330 920 M1130 610L1250 820 M1180 640L1260 700 M975 715L1030 700 1070 680 1160 650 M975 800L1210 650 1290 500 M1000 870L1230 700 M1040 900L1250 780 M880 915L1050 905 1110 870 1200 1000 M975 715L1100 850 M1000 700L1140 870 M1060 930L1130 995 1180 985 M1080 945L1220 850 1300 790 1345 795 1360 765 1420 770 M975 560V630 M1070 580L1270 640 1360 520 1520 570 1500 650 1430 710 M1270 640L1500 650 M1130 540L1290 590 1340 500 M1395 450L1350 680 M1500 460L1420 720 M1300 520L1220 670 M1190 500L1140 640 M1240 480L1180 640 M1240 500L1440 410 1560 460 M980 790L1060 880 M890 1020H1300 M950 1020V1080 M1000 1020V1080 M1055 1020V1080 M1105 1020V1080 M1155 1020V1080 M1205 1020V1080 M1100 970L1105 1030 M1235 900L1215 975 M1255 905L1235 975 M1275 920L1260 955 M1290 925L1285 960
M385 1070L380 1300 350 1325 380 1350 375 1450 M230 1250V1450L590 1470 M380 1195H600 M540 1070L520 1460 M235 1325H350 M405 1325L590 1330 M385 1390H435L445 1455 M445 1330L430 1395 M395 1125L445 1130 465 1070 M445 1130L460 1190 M500 1095V1165 M500 1130H540 M395 1460L415 1560 M600 1350L690 1360 840 1275H910 M1530 680L1550 710 1520 790 1505 880 M1430 780L1440 850 1420 900 1390 885Z M1380 920L1480 950 1500 820 M1310 1040L1340 1075 1450 1035 1480 1080 1500 1060 1400 950 M885 0L930 85 M585 0L900 95 1220 150 1260 110 1300 125 1330 0 M1440 0L1500 30 1540 90 M1440 140L1520 120 1560 150"/></g>
<g class="mid" transform="translate(2240 1850) scale(.33333)"><path style="stroke-width:4.500px" d="M340 0L385 30 480 150 560 230 800 380 1000 430 M1240 465L1310 450 1400 390 1460 378 1520 405 1590 380 1610 400 1600 440 1570 500 1530 680 1395 780 1340 920 1310 1030Q1290 1090 1230 1090L390 1050 M1350 915L1520 990 1560 970 M895 1080L935 1170 910 1280 970 1560"/></g>

<!-- Es Castell and La Mola streets -->
<g class="minor" transform="translate(2900 1850) scale(.38265)"><path d="M100 862L150 868 240 905 250 940 230 980 170 1080 M340 840L170 1070 M275 870L285 905 M205 935L160 1000 210 1030 M205 935L245 965 M190 965L225 990 M175 985L215 1010 M320 880L395 930 M305 895L375 945 M290 915L365 960 M275 930L355 985 M265 950L365 1020 M250 970L355 1040 M240 985L340 1060 M230 1000L330 1080 M220 1020L320 1095 M205 1035L300 1100 M190 1055L280 1120 M380 925L355 1040 320 1100 M405 930L360 1020 M180 1090L390 1230 M390 1030L430 1060 390 1120 M490 970L640 1080 M530 970L430 1090 M575 985L490 1110 M450 1010L560 1090 M470 990L600 1090 M440 1040L530 1110 M380 1030L340 1090 M500 1210L570 1280 600 1330 660 1330 M510 1215L400 1250 M570 1240L535 1305 560 1360 560 1400 610 1400 640 1360 M570 1240L620 1280 M625 1250L560 1390 M620 1275L700 1265 740 1285 715 1300 M720 1280L700 1360 640 1420 630 1450 M640 1320L670 1390 M680 1328H710 M575 1395L580 1450 605 1448 610 1400 M505 1420L560 1390
M690 1470L740 1435 790 1440 930 1530 M690 1470L760 1568 M700 1510L780 1485 900 1550 M790 1440L780 1490 M850 1485L810 1568 M730 1540L800 1520
M575 150L580 230 565 260 585 285 620 160 665 145 725 110 765 35 M665 145L655 215 635 200 M740 90L705 200 M740 92H765L745 185 655 270 640 262 630 230 605 245 610 300 565 325 600 370 570 388 M745 230L690 300 640 305 610 400 555 430 M745 185L755 235 820 248 850 182 930 190 930 200 870 250 805 345 775 335 790 295 M775 250L740 350 785 435 730 490 740 520 780 530 785 630 835 660 860 715 905 690 M860 265L880 325 820 400 820 460 790 495 820 540 825 600 875 655 900 640 935 400 965 310 985 175 M860 280L920 330 870 400 845 490 860 570 900 640 905 690 M950 300L915 335 M915 335L880 450 865 570 M975 240L1030 250 1050 325 975 440 965 560 985 570 1010 555 1000 490 1030 440 1060 455 1040 505 M985 570L935 615 930 670 880 720 M770 635L770 680 810 690 860 750 M160 235L180 270 240 270 M235 300L330 335 325 400 M330 340L330 395 370 420 M450 475L530 455 M500 175L495 260 528 350 510 415 450 475 M0 1500L90 1430 190 1430 300 1390 390 1310 M0 1220L110 1110"/></g>

<!-- location marker -->
<circle cx="2329.300" cy="2232" r="44" fill="#161c28" opacity=".55" filter="url(#glow)"/>
<circle cx="2329.300" cy="2227.700" r="39.600" fill="#cbcbcf"/><circle cx="2329.300" cy="2227.700" r="28" fill="#3b82f6"/>

<g font-weight="700" fill="#dbe3ee" stroke="#3a465a" stroke-opacity=".5" stroke-width="5" paint-order="stroke" stroke-linejoin="round">
<text x="2398" y="2042" font-size="84" letter-spacing="3" textLength="263" lengthAdjust="spacingAndGlyphs">Mahón</text>
<text x="2939" y="2305" font-size="51" letter-spacing="1.500" textLength="234" lengthAdjust="spacingAndGlyphs">Es Castell</text>
</g>
<g font-weight="700" fill="#7ba4f8" stroke="#1c2748" stroke-width="7" paint-order="stroke" stroke-linejoin="round" font-size="35">
<text x="1495" y="2893" textLength="250" lengthAdjust="spacingAndGlyphs">Aeropuerto de</text>
<text x="1482" y="2929" textLength="275" lengthAdjust="spacingAndGlyphs">Menorca (MAH)</text>
<text x="2179" y="2824" textLength="194" lengthAdjust="spacingAndGlyphs">Aeródromo</text>
<text x="2176" y="2860" textLength="200" lengthAdjust="spacingAndGlyphs">de San Luis</text>
</g>
<g stroke="#24345f" stroke-width="3"><rect x="1595" y="2801" width="52" height="52" rx="8" fill="url(#badge)"/><rect x="2251" y="2730.500" width="52" height="52" rx="8" fill="url(#badge)"/></g>
<g fill="#0c1018"><use href="#plane" transform="translate(1620.500 2827.500) rotate(45) scale(1.450 1.650) translate(-11.500 -12)"/><use href="#plane" transform="translate(2276.500 2757) rotate(45) scale(1.450 1.650) translate(-11.500 -12)"/></g>
</svg>
</template>

<script>
const define = (name, css, html, setup) => customElements.define(name, class extends HTMLElement {
  constructor() {
    super();
    this.attachShadow({ mode: 'open' }).innerHTML = `<style>${css}</style>${html}`;
  }
  connectedCallback() { if (setup) setup(this, this.shadowRoot); }
});

define('app-backdrop', `
:host{display:flex;position:relative;width:100vw;height:100vh;box-sizing:border-box;padding:calc(367*var(--r));isolation:isolate;
background:linear-gradient(to bottom,#e5fed2 0%,#cffab2 45%,#b8f68a 100%)}
:host::before{content:"";position:absolute;inset:0;z-index:-1;background:linear-gradient(to bottom,#d0fee0 0%,#bbf9c5 45%,#a2f09b 100%);
-webkit-mask-image:linear-gradient(to right,transparent,#000);mask-image:linear-gradient(to right,transparent,#000)}`, `<slot></slot>`);

define('browser-frame', `
:host{display:flex;flex:1;box-sizing:border-box;min-width:0;padding:calc(15*var(--r));border:calc(2*var(--r)) solid rgba(255,255,255,.35);border-radius:calc(22*var(--r));
background:rgba(246,247,246,.62);box-shadow:0 calc(8*var(--r)) calc(40*var(--r)) rgba(60,110,60,.14)}
.view{flex:1;min-width:0;overflow:hidden;background:#000;border-radius:calc(12*var(--r));display:flex;flex-direction:column;align-items:center}
main{width:calc(2160*var(--r));padding-top:calc(49.500*var(--r));flex:none}`,
`<div class="view"><main><slot></slot></main></div>`);

define('site-header', `
:host{display:flex;justify-content:space-between;font-size:calc(46.4*var(--r));line-height:calc(70.3*var(--r));color:#fff;letter-spacing:-.0185em}
nav{display:flex;gap:calc(37*var(--r))}`,
`<slot name="brand"></slot><nav><slot></slot></nav>`);

define('nav-link', `:host{display:block;color:#a1a1a1}`, `<slot></slot>`);

define('page-section', `
:host{display:flex;flex-direction:column}
h2{margin:calc(99*var(--r)) 0 calc(15.500*var(--r));font-size:calc(70*var(--r));line-height:calc(84.700*var(--r));font-weight:700;color:#fff;letter-spacing:var(--track,-.03em)}`,
`<h2></h2><slot></slot>`, (el, root) => { root.querySelector('h2').textContent = el.getAttribute('heading'); });

define('text-block', `
:host{display:block;margin-top:calc(35.500*var(--r));font-size:calc(46.4*var(--r));line-height:calc(70.300*var(--r));color:#d6d6d6;letter-spacing:-.0165em;white-space:nowrap}
::slotted(a){color:#fff}`, `<slot></slot>`);

define('map-figure', `
:host{display:flex;flex-direction:column;margin-top:calc(46*var(--r))}
.art{width:calc(2160*var(--r));height:calc(1986*var(--r));border-radius:calc(24*var(--r));overflow:hidden}
svg{display:block;width:100%;height:100%;font-family:Inter,"Liberation Sans",sans-serif}
figcaption{margin-top:calc(13*var(--r));text-align:right;font-style:italic;font-size:calc(39.600*var(--r));line-height:calc(60*var(--r));color:#a1a1a1;letter-spacing:-.006em}
.teal{fill:#255b5b}.land{fill:#355a50}.sage{fill:#33685e}.lime{fill:#3e6955}.urban{fill:#3a465a}.square{fill:#235a58}.sea{fill:#22357d}
.minor path,.mid path,.major path,.majorline{fill:none;stroke-linejoin:round;stroke-linecap:round;vector-effect:non-scaling-stroke}
.minor path{stroke:#576479;stroke-width:2.900px}
.mid path{stroke:#637089;stroke-width:5.500px}
.major path,.majorline{stroke:#7684a2;stroke-width:9px}
.knot{fill:#66738a}
.ferry path{fill:none;stroke:#2a459b;stroke-width:4px}
.grid{fill:none;stroke:#3c6a8c;stroke-opacity:.4;stroke-width:2.500px}`,
`<div class="art"></div><figcaption><slot></slot></figcaption>`, (el, root) => {
  root.querySelector('.art').append(document.getElementById('map-art').content.cloneNode(true));
  // Low-contrast slanted facets that give the northern hills their relief.
  let seed = 7;
  const rnd = () => (seed = (seed * 16807) % 2147483647) / 2147483647;
  let out = '';
  for (let i = 0; i < 1100; i++) {
    const x = 1464 + rnd() * 2000, y = 1030 + rnd() * 1150, w = -6 + rnd() * 26, h = 16 + rnd() * 40, s = 12 + rnd() * 34;
    out += `<path d="M${x.toFixed(0)} ${y.toFixed(0)}l${w.toFixed(0)} ${(-h).toFixed(0)} ${s.toFixed(0)} ${(h * .35).toFixed(0)} ${(-w).toFixed(0)} ${(h * .8).toFixed(0)}z" fill="${rnd() < .6 ? '#123' : '#6a9a88'}" opacity="${(.02 + rnd() * .04).toFixed(3)}"/>`;
  }
  root.getElementById('relief').innerHTML = out;
});
</script>
</body>
</html>
